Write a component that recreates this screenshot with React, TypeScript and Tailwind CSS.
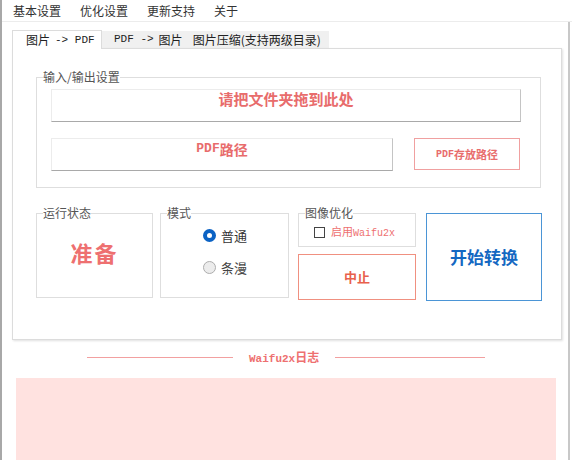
const cjk = { fontFamily: '"Noto Sans CJK SC", "Liberation Sans", sans-serif' };
const mono = { fontFamily: '"Liberation Mono", "Noto Sans CJK SC", monospace' };

function Group({ title, className, children }: { title: string; className: string; children?: React.ReactNode }) {
  return (
    <fieldset className={`border border-[#dedede] ${className}`}>
      <legend className="ml-[6px] px-0 text-[12px] leading-[14px] text-[#555]">{title}</legend>
      {children}
    </fieldset>
  );
}

export default function App() {
  return (
    <div className="w-[576px] h-[460px] bg-white overflow-hidden flex flex-col border-l-2 border-[#a8a8a8]" style={cjk}>
      {/* menu bar */}
      <div className="h-[22px] flex items-center pl-[11px] gap-[19px] text-[12px] text-[#333] border-b border-[#ececec] mr-[4px]">
        <span>基本设置</span>
        <span>优化设置</span>
        <span>更新支持</span>
        <span>关于</span>
      </div>

      <div className="flex flex-1 min-h-0">
        <div className="w-[568px] border-r-2 border-[#c8c8c8] flex flex-col">
          {/* tabs */}
          <div className="mt-[8px] ml-[10px] flex items-end h-[18px] text-[12px] text-[#222]">
            <div className="h-[19px] w-[90px] bg-white border-t border-l border-r border-[#dcdcdc] flex items-center pl-[13px] -mb-px relative z-10">
              图片 <span style={mono} className="ml-[5px] text-[11px]">-&gt; PDF</span>
            </div>
            <div className="h-[17px] bg-[#f0f0f0] flex items-center pl-[12px] pr-[6px]">
              <span style={mono} className="text-[11px] mr-[5px]">PDF -&gt;</span>图片
            </div>
            <div className="h-[17px] bg-[#f0f0f0] flex items-center pl-[4px] pr-[6px] w-[140px]">图片压缩(支持两级目录)</div>
          </div>

          {/* pane */}
          <div className="ml-[10px] w-[550px] h-[292px] border border-[#dcdcdc] shadow-[1px_1px_2px_rgba(0,0,0,0.12)] pl-[23px] pt-[21px]">
            <Group title="输入/输出设置" className="w-[505px] h-[118px]">
              <div className="px-[14px] pt-[5px]">
                <div className="h-[33px] w-[470px] border border-[#ececec] border-b-[#a9a9a9] border-r-[#c4c4c4] flex justify-center text-[15px] leading-[18px] font-bold text-[#e86c6c]">
                  请把文件夹拖到此处
                </div>
                <div className="mt-[16px] flex items-start">
                  <div className="h-[33px] w-[342px] border border-[#ececec] border-b-[#a9a9a9] border-r-[#c4c4c4] flex justify-center text-[14px] leading-[20px] font-bold text-[#e86c6c]">
                    <span style={mono} className="font-bold text-[13px]">PDF</span>路径
                  </div>
                  <div className="ml-[21px] h-[32px] w-[106px] border border-[#f0a0a0] flex items-center justify-center text-[11px] font-bold text-[#e86c6c]">
                    <span style={mono} className="font-bold text-[10px]">PDF</span>存放路径
                  </div>
                </div>
              </div>
            </Group>

            <div className="mt-[18px] flex items-start">
              <Group title="运行状态" className="w-[117px] h-[92px]">
                <div className="h-[64px] flex items-center justify-center text-[22px] font-bold text-[#ee7070] tracking-[2px]">准备</div>
              </Group>
              <Group title="模式" className="ml-[7px] w-[129px] h-[92px]">
                <div className="pl-[42px] pt-[6px] text-[13px] text-[#333]">
                  <div className="flex items-center gap-[5px]">
                    <span className="w-[13px] h-[13px] rounded-full border-[4px] border-[#0b62c4] bg-white" />
                    普通
                  </div>
                  <div className="mt-[12px] flex items-center gap-[5px] text-[#444]">
                    <span className="w-[13px] h-[13px] rounded-full border border-[#adadad] bg-[#ececec]" />
                    条漫
                  </div>
                </div>
              </Group>
              <div className="ml-[9px] w-[118px]">
                <Group title="图像优化" className="w-[118px] h-[41px]">
                  <div className="flex items-center pl-[15px] pt-[3px]">
                    <span className="w-[11px] h-[11px] border border-[#444] bg-white" />
                    <span className="ml-[6px] text-[11px] text-[#ee7070]">
                      启用<span style={mono} className="text-[10px]">Waifu2x</span>
                    </span>
                  </div>
                </Group>
                <div className="mt-[7px] h-[46px] w-[118px] border border-[#f09080] flex items-center justify-center text-[13px] font-bold text-[#e8604c]">
                  中止
                </div>
              </div>
              <div className="ml-[10px] mt-[7px] h-[88px] w-[116px] border border-[#4b95d6] flex items-center justify-center text-[17px] font-bold text-[#1468c2]">
                开始转换
              </div>
            </div>
          </div>

          {/* log separator */}
          <div className="mt-[8px] flex items-center ml-[85px]">
            <div className="w-[146px] h-px bg-[#f2a0a0]" />
            <div className="mx-[16px] text-[12px] font-bold text-[#ee7070]">
              <span style={mono} className="font-bold text-[11px]">Waifu2x</span>日志
            </div>
            <div className="w-[150px] h-px bg-[#f2a0a0]" />
          </div>

          <div className="mt-[10px] ml-[14px] w-[540px] flex-1 bg-[#ffe2e0]" />
        </div>
      </div>
    </div>
  );
}
